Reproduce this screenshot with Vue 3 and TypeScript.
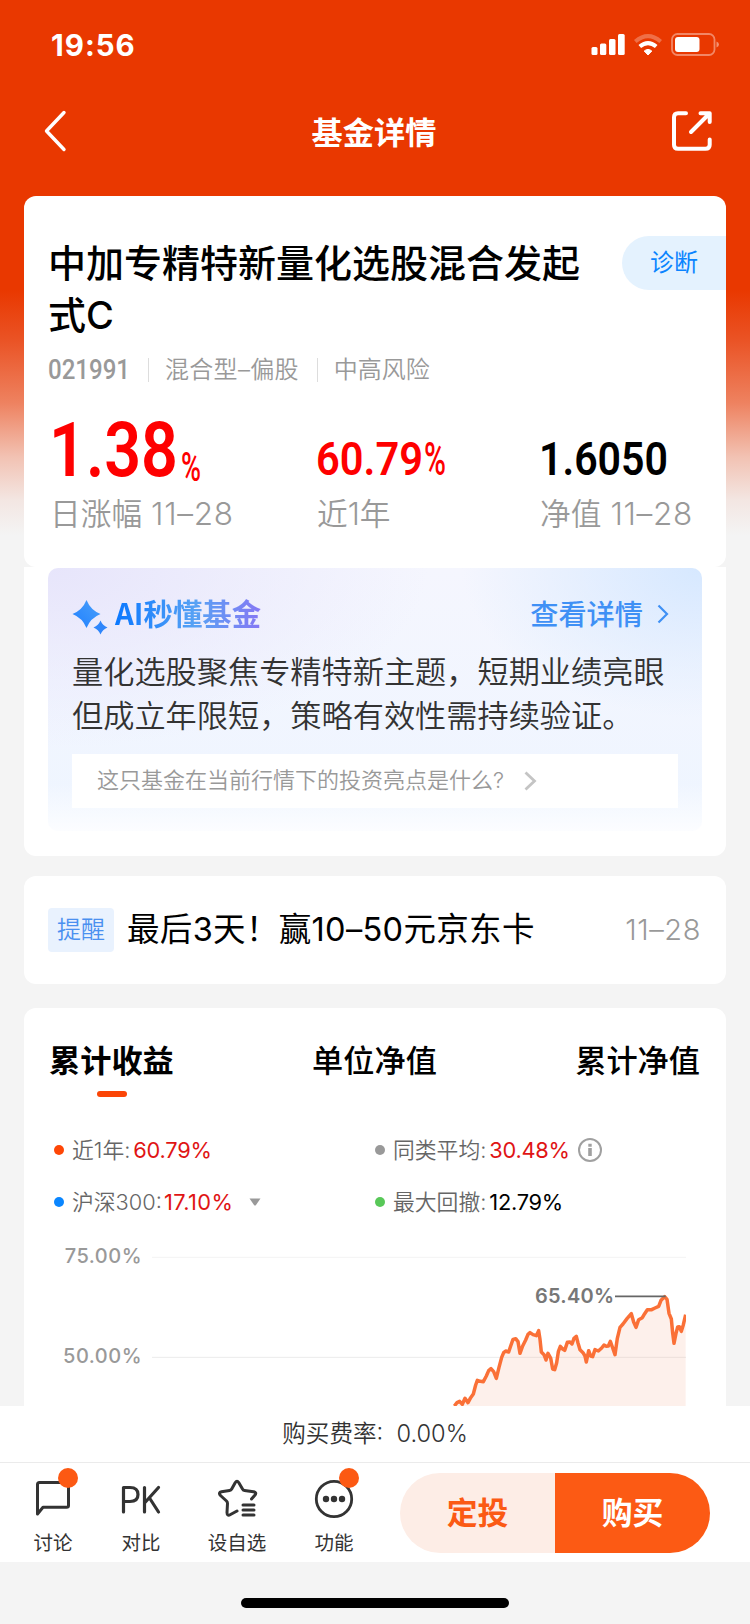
<script setup lang="ts">
interface Part { text: string; x: number; y: number; size: number; width: number; weight: number }
interface Stat { label: string; date: string; tone: 'up' | 'plain'; parts: Part[] }

const stats: Stat[] = [
  {
    label: '日涨幅',
    date: '11–28',
    tone: 'up',
    parts: [
      { text: '1.38', x: 1, y: 58, size: 76, width: 129, weight: 600 },
      { text: '%', x: 133, y: 63, size: 40, width: 20, weight: 500 },
    ],
  },
  {
    label: '近1年',
    date: '',
    tone: 'up',
    parts: [
      { text: '60.79', x: 1, y: 57, size: 47, width: 107, weight: 600 },
      { text: '%', x: 109, y: 57, size: 46, width: 22, weight: 500 },
    ],
  },
  {
    label: '净值',
    date: '11–28',
    tone: 'plain',
    parts: [{ text: '1.6050', x: 1, y: 57, size: 47, width: 129, weight: 600 }],
  },
]

const tabs: string[] = ['累计收益', '单位净值', '累计净值']

interface Legend { name: string; value: string; color: string; up: boolean; extra?: 'info' | 'drop' }
const legends: Legend[] = [
  { name: '近1年:', value: '60.79%', color: '#fe4606', up: true },
  { name: '同类平均:', value: '30.48%', color: '#999999', up: true, extra: 'info' },
  { name: '沪深300:', value: '17.10%', color: '#0a86ff', up: true, extra: 'drop' },
  { name: '最大回撤:', value: '12.79%', color: '#58c858', up: false },
]

const points: [number, number][] = [
  [238, 528], [246, 518], [254, 514], [262, 523], [270, 505], [279, 518], [287, 503], [295, 492], [302, 465], [307, 451],
  [316, 454], [325, 455], [334, 438], [341, 422], [348, 416], [356, 425], [364, 445], [372, 412], [380, 382], [386, 368],
  [392, 363], [401, 366], [407, 348], [414, 328], [422, 326], [429, 335], [435, 370], [443, 348], [452, 330], [459, 313],
  [465, 308], [474, 314], [484, 317], [491, 302], [495, 328], [499, 366], [507, 374], [513, 390], [519, 370], [527, 384],
  [533, 417], [539, 419], [545, 398], [550, 365], [556, 349], [563, 357], [569, 361], [577, 337], [585, 336], [591, 342],
  [597, 325], [604, 319], [609, 339], [615, 359], [624, 368], [630, 378], [634, 396], [641, 362], [647, 378], [653, 380],
  [660, 359], [670, 363], [680, 354], [687, 345], [694, 349], [700, 348], [706, 334], [711, 348], [720, 374], [727, 325],
  [735, 292], [744, 282], [756, 266], [769, 251], [776, 276], [783, 292], [791, 269], [802, 263], [809, 251], [817, 239],
  [830, 239], [840, 234], [851, 229], [858, 211], [869, 200], [876, 208], [882, 250], [889, 267], [893, 309], [897, 340],
  [903, 310], [908, 291], [913, 290], [919, 304], [925, 284], [932, 254],
]
const line: string = points.map(([x, y]) => `${x},${y}`).join(' ')
const area: string = `${line} 932,540 238,540`
</script>

<template>
  <div class="page">
    <header class="top">
      <div class="status">
        <span class="clock">19:56</span>
        <svg class="signals" width="130" height="24" viewBox="0 0 130 24">
          <g fill="#fff">
            <rect x="1.5" y="14" width="6" height="8" rx="1.5" />
            <rect x="10" y="10.500" width="6.300" height="11.500" rx="1.500" />
            <rect x="19" y="6" width="6.500" height="16" rx="1.500" />
            <rect x="28" y="1" width="6.700" height="21" rx="1.500" />
            <path d="M58 22 L54.200 18 Q58 14.800 61.800 18 Z" stroke="#fff" stroke-linejoin="round" />
            <rect x="85" y="4" width="24.500" height="15" rx="3" />
          </g>
          <path d="M49.800 13.600 Q58 6.600 66.200 13.600" fill="none" stroke="#fff" stroke-width="4" />
          <path d="M45.300 8.500 Q58 -2.300 70.700 8.500" fill="none" stroke="#fff" stroke-opacity=".28" stroke-width="4" />
          <rect x="82" y="1" width="42.500" height="21" rx="5.500" fill="none" stroke="#fff" stroke-opacity=".4" stroke-width="1.800" />
          <path d="M126.500 8.500 Q129 9.500 129 11.500 T126.500 14.500 Z" fill="#fff" fill-opacity=".45" />
        </svg>
      </div>
      <nav class="nav">
        <svg width="24" height="42" viewBox="0 0 24 42" fill="none" stroke="#fff" stroke-width="3.400" stroke-linecap="round" stroke-linejoin="round">
          <path d="M21 2.500 L3.500 21 L21 39.500" />
        </svg>
        <h1>基金详情</h1>
        <svg width="42" height="42" viewBox="0 0 42 42" fill="none" stroke="#fff" stroke-width="4" stroke-linecap="round" stroke-linejoin="round">
          <path d="M15 3.200 H7 Q3 3.200 3 7.200 V34.800 Q3 38.800 7 38.800 H34.500 Q38.700 38.800 38.700 34.800 V29.500" />
          <path d="M29.500 3.200 H38.700 V12 M38 4 L20 22" />
        </svg>
      </nav>
    </header>

    <section class="hero">
      <div class="hero-head">
        <h2>中加专精特新量化选股混合发起式C</h2>
        <span class="diagnose">诊断</span>
      </div>
      <div class="meta">
        <svg width="83" height="30"><text x="0" y="24" font-size="27" font-weight="500" textLength="82" lengthAdjust="spacingAndGlyphs">021991</text></svg>
        <i></i><span class="kind">混合型–偏股</span><i></i><span>中高风险</span>
      </div>
      <div class="stats">
        <div v-for="s in stats" :key="s.label" class="stat">
          <svg :class="s.tone" width="160" height="66">
            <text
              v-for="p in s.parts" :key="p.text" :x="p.x" :y="p.y" :font-size="p.size" :font-weight="p.weight"
              :textLength="p.width" lengthAdjust="spacingAndGlyphs"
            >{{ p.text }}</text>
          </svg>
          <div class="label">{{ s.label }}<span v-if="s.date">{{ s.date }}</span></div>
        </div>
      </div>
    </section>

    <section class="ai-wrap">
      <div class="ai">
        <div class="ai-head">
          <svg width="36" height="36" viewBox="0 0 36 36">
            <defs>
              <linearGradient id="spark" x1="0" y1="1" x2="1" y2="0">
                <stop offset="0" stop-color="#2080ff" /><stop offset="1" stop-color="#4aa0fa" />
              </linearGradient>
            </defs>
            <path d="M14.500 1 Q18.500 11 28.500 15 Q18.500 19 14.500 29 Q10.500 19 .500 15 Q10.500 11 14.500 1Z" fill="url(#spark)" />
            <path d="M28.500 21.500 Q30.500 26.500 35.500 28.500 Q30.500 30.500 28.500 35.500 Q26.500 30.500 21.500 28.500 Q26.500 26.500 28.500 21.500Z" fill="#2f86fb" />
          </svg>
          <strong>AI秒懂基金</strong>
          <a>查看详情</a>
          <svg class="go" width="12" height="20" viewBox="0 0 12 20" fill="none" stroke="#3f90f5" stroke-width="2.200"><path d="M1.500 1.500 L10 10 L1.500 18.500" /></svg>
        </div>
        <p>量化选股聚焦专精特新主题，短期业绩亮眼<br>但成立年限短，策略有效性需持续验证。</p>
        <div class="ask">
          <span>这只基金在当前行情下的投资亮点是什么?</span>
          <svg width="13" height="20" viewBox="0 0 13 20" fill="none" stroke="#c4c4c4" stroke-width="2.800"><path d="M1.500 1.500 L10.500 10 L1.500 18.500" /></svg>
        </div>
      </div>
    </section>

    <section class="remind">
      <span class="tag">提醒</span>
      <span class="msg">最后3天！赢10–50元京东卡</span>
      <time>11–28</time>
    </section>

    <section class="perf">
      <div class="tabs">
        <span v-for="(t, i) in tabs" :key="t" :class="{ on: i === 0 }">{{ t }}</span>
      </div>
      <div class="legend">
        <div v-for="l in legends" :key="l.name" class="item">
          <svg width="10" height="10"><circle cx="5" cy="5" r="5" :fill="l.color" /></svg>
          <span class="name">{{ l.name }}</span>
          <span class="val" :class="{ up: l.up, wide: l.extra === 'drop' }">{{ l.value }}</span>
          <svg v-if="l.extra === 'info'" class="info" width="24" height="24" viewBox="0 0 24 24" fill="none" stroke="#a0a0a0">
            <circle cx="12" cy="12" r="11" stroke-width="2" />
            <path d="M12 10 V18" stroke-width="3.600" /><path d="M12 5.800 V8.800" stroke-width="3.400" />
          </svg>
          <svg v-if="l.extra === 'drop'" class="drop" width="12" height="8"><path d="M.500 .500 H11.500 L7 7 Q6 8 5 7 Z" fill="#999" /></svg>
        </div>
      </div>
      <div class="chart">
        <div class="axis"><span>75.00%</span><span>50.00%</span></div>
        <svg class="plot" width="534" height="176" viewBox="-669 0 1602 528">
          <path d="M-669 82 H933" stroke="#f3f3f3" stroke-width="3" />
          <path d="M-669 382 H933" stroke="#ebebeb" stroke-width="3" />
          <polygon :points="area" fill="#f4ab90" fill-opacity=".18" />
          <polyline :points="line" fill="none" stroke="#fa7037" stroke-width="10.500" stroke-linejoin="round" />
          <path d="M720 199 H872" stroke="#666" stroke-width="5" />
          <text x="480" y="219" textLength="237" font-size="60" font-weight="600" fill="#777">65.40%</text>
        </svg>
      </div>
    </section>

    <footer>
      <div class="fee">购买费率:&nbsp; 0.00%</div>
      <div class="bar">
        <div class="act talk">
          <svg width="44" height="46" viewBox="0 0 44 46" fill="none" stroke="#333" stroke-width="3" stroke-linejoin="round">
            <path d="M6.500 41 V11.500 Q6.500 9.500 8.500 9.500 H35.500 Q37.500 9.500 37.500 11.500 V32.500 Q37.500 34.300 35.500 34.300 H12 L6.500 41 Z" />
          </svg>
          <span>讨论</span><b></b>
        </div>
        <div class="act pk">
          <svg width="44" height="46" viewBox="0 0 44 46" fill="none" stroke="#333" stroke-width="3.200" stroke-linecap="round" stroke-linejoin="round">
            <path d="M4.500 39 V14.500 H11 Q19 14.500 19 21.500 Q19 28.500 11 28.500 H4.500 M25.500 14.500 V39 M39.500 14.500 L26 29.500 M30.500 25 L39.500 39" />
          </svg>
          <span>对比</span>
        </div>
        <div class="act star">
          <svg width="44" height="46" viewBox="0 0 44 46" fill="none" stroke="#333" stroke-width="3" stroke-linecap="round" stroke-linejoin="round">
            <path d="M22 38 L15.500 41.500 Q12 43.500 12 39.500 L12.500 30.500 Q12.500 29 11.500 28 L5.500 22.500 Q3 19.500 6.500 18.800 L14.500 17.500 Q16 17.300 16.700 16 L20.300 9.500 Q22 7 23.700 9.500 L27.500 16 Q28 17.300 29.500 17.500 L38.500 18.800 Q42 19.500 40 22 L36.500 26" />
            <path d="M28 32 H39 M28 37 H39 M28 42 H39" />
          </svg>
          <span>设自选</span>
        </div>
        <div class="act more">
          <svg width="44" height="46" viewBox="0 0 44 46" fill="none" stroke="#333" stroke-width="2.800">
            <circle cx="22" cy="26" r="17.700" />
            <g fill="#333" stroke="none"><circle cx="14" cy="26" r="3.200" /><circle cx="22" cy="26" r="3.200" /><circle cx="30" cy="26" r="3.200" /></g>
          </svg>
          <span>功能</span><b></b>
        </div>
        <div class="cta"><button class="plan">定投</button><button class="buy">购买</button></div>
      </div>
      <div class="home"><i></i></div>
    </footer>
  </div>
</template>

<style>
body { margin: 0; }
</style>

<style scoped>
* { box-sizing: border-box; }
.page {
  width: 750px; height: 1624px; overflow: hidden; display: flex; flex-direction: column;
  font-family: Inter, "Noto Sans CJK SC", sans-serif; color: #000;
  background: linear-gradient(180deg, #e93800 0, #e93800 290px, #ea5325 340px, #ee8260 403px, #f2c2b3 457px, #f3e6e2 500px, #f4f4f4 535px);
}
svg { display: block; flex: none; overflow: visible; }
svg.plot { overflow: hidden; }
h1, h2, p { margin: 0; }
.top { height: 196px; flex: none; }
.status { height: 90px; display: flex; align-items: center; justify-content: space-between; padding: 0 30px 0 51px; }
.status .clock { font-size: 29.500px; font-weight: 700; color: #fff; letter-spacing: 1px; }
.nav { height: 82px; display: flex; align-items: center; justify-content: space-between; padding: 0 37px 0 43px; }
.nav h1 { color: #fff; font-size: 31.200px; line-height: 40px; font-weight: 700; padding: 4px 0 0 10px; }

.hero { flex: none; height: 371px; margin: 0 24px; padding: 41px 0 0 24px; background: #fff; border-radius: 12px; }
.hero-head { display: flex; justify-content: space-between; align-items: flex-start; }
.hero h2 { width: 550px; font-size: 38px; line-height: 52px; font-weight: 500; }
.diagnose { flex: none; width: 104px; height: 54px; margin-top: -1px; padding-left: 28px; border-radius: 27px 0 0 27px; background: #e4f2fe; color: #0a84ff; font-size: 24px; line-height: 53px; }
.meta { height: 26px; margin-top: 16px; display: flex; align-items: center; color: #999; fill: #999; font-size: 24px; font-weight: 350; }
.meta text, .stats text { font-family: Roboto, sans-serif; }
.meta span { line-height: 26px; margin-top: 0; }
.meta .kind { letter-spacing: .3px; margin-right: 1px; }
.meta i { width: 1px; height: 24px; background: #ddd; margin: 0 16px 0 17px; }
.stats { display: grid; grid-template-columns: 267px 223px 1fr; margin-top: 35px; }
.stats .up { fill: #fe0000; }
.stats .plain { fill: #000; }
.label { margin-top: 9px; padding-left: 2px; font-size: 30.700px; line-height: 42px; color: #999; font-weight: 350; white-space: nowrap; }
.label span { margin-left: 9px; font-size: 31.500px; letter-spacing: .7px; }

.ai-wrap { flex: none; height: 289px; margin: 0 24px; padding: 1px 24px 0; background: #fff; border-radius: 0 0 12px 12px; }
.ai {
  height: 263px; padding: 24px 24px 0; border-radius: 10px;
  background:
    linear-gradient(180deg, rgba(255,255,255,0) 82%, #fcfdff 100%),
    radial-gradient(ellipse 240px 150px at 100% 0, #d6e8ff, rgba(214,232,255,0)),
    radial-gradient(ellipse 380px 180px at 0 0, #e7e5fb, rgba(236,233,252,0)),
    linear-gradient(180deg, #f5f6fe, #eef5ff);
}
.ai-head { height: 44px; display: flex; align-items: center; }
.ai-head svg:first-child { margin-top: 5px; }
.ai-head strong { margin: -4px 0 0 7px; font-family: "Noto Sans CJK SC", sans-serif; font-size: 29.400px; font-weight: 700; line-height: 44px; background: linear-gradient(90deg, #0a78ff, #58a2f4 55%, #8678f4); -webkit-background-clip: text; background-clip: text; color: transparent; }
.ai-head a { margin: -3px 0 0 auto; font-size: 28.200px; font-weight: 500; color: #3f90f5; }
.ai-head .go { margin: 0 9px 0 14px; }
.ai p { margin-top: 14px; font-size: 31.200px; line-height: 44px; color: #333; font-weight: 350; white-space: nowrap; }
.ask { height: 54px; margin-top: 16px; padding-left: 25px; background: #fff; display: flex; align-items: center; color: #999; font-size: 22px; font-weight: 350; }
.ask span { margin-top: -6px; }
.ask svg { margin-left: 20px; }

.remind { flex: none; height: 108px; margin: 20px 24px 0; padding: 0 25px 0 24px; background: #fff; border-radius: 12px; display: flex; align-items: center; }
.tag { width: 66px; height: 44px; border-radius: 4px; background: #e9f2fe; color: #4a90f0; font-size: 24px; line-height: 44px; text-align: center; font-weight: 350; }
.msg { margin: -7px 0 0 13px; font-size: 32.500px; letter-spacing: .33px; white-space: nowrap; }
.remind time { margin: -2px 0 0 auto; font-size: 29px; letter-spacing: .6px; color: #999; font-weight: 350; }

.perf { flex: 1; min-height: 0; overflow: hidden; margin: 24px 24px 0; background: #fff; border-radius: 12px 12px 0 0; }
.tabs { height: 89px; padding: 31px 26px 0 25px; display: flex; justify-content: space-between; font-size: 31.200px; line-height: 44px; font-weight: 500; }
.tabs .on { font-weight: 700; display: flex; flex-direction: column; align-items: center; }
.tabs .on::after { content: ""; width: 30px; height: 6px; margin: 8px 0 0 2px; border-radius: 3px; background: #fb4506; flex: none; }
.legend { display: grid; grid-template-columns: 321px 1fr; grid-auto-rows: 52px; margin-top: 27px; padding-left: 30px; }
.item { display: flex; align-items: center; font-size: 22px; }
.name { color: #666; margin: -3px 0 0 8px; font-weight: 350; font-size: 21.800px; }
.val { margin-left: 3px; font-size: 21.800px; letter-spacing: -.25px; }
.val.up { color: #e01414; }
.val.wide { margin-left: 2px; letter-spacing: .4px; }
.info { margin-left: 8px; }
.drop { margin-left: 16px; }
.chart { display: flex; margin-top: 2px; }
.axis { width: 128px; height: 176px; padding: 11px 10px 0 0; text-align: right; color: #999; font-size: 20px; font-weight: 500; line-height: 30px; letter-spacing: .5px; }
.axis span { display: block; height: 100px; }

footer { flex: none; background: #fff; }
.fee { height: 57px; line-height: 56px; text-align: center; font-size: 23.600px; color: #333; font-weight: 350; border-bottom: 1px solid #ebebeb; }
.bar { height: 99px; display: flex; padding-left: 31px; }
.act { position: relative; width: 44px; margin-top: 10px; display: flex; flex-direction: column; align-items: center; font-size: 19.500px; color: #333; white-space: nowrap; }
.act span { line-height: 28px; margin-top: 10px; }
.act b { position: absolute; width: 20px; height: 20px; border-radius: 50%; background: #fc5913; left: 27px; top: -5px; }
.pk { margin-left: 44px; }
.star { margin-left: 52px; }
.more { margin-left: 53px; }
.cta { margin: 10px 0 0 44px; display: flex; height: 80px; border-radius: 40px; overflow: hidden; }
.cta button { width: 155px; border: 0; padding: 0 0 6px; font: inherit; font-size: 30.800px; font-weight: 700; }
.plan { background: #fdede6; color: #fb5a14; }
.buy { background: #fc5a14; color: #fff; }
.home { height: 62px; background: #f4f4f4; display: flex; justify-content: center; padding-top: 36px; }
.home i { width: 268px; height: 10px; border-radius: 5px; background: #000; }
</style>
